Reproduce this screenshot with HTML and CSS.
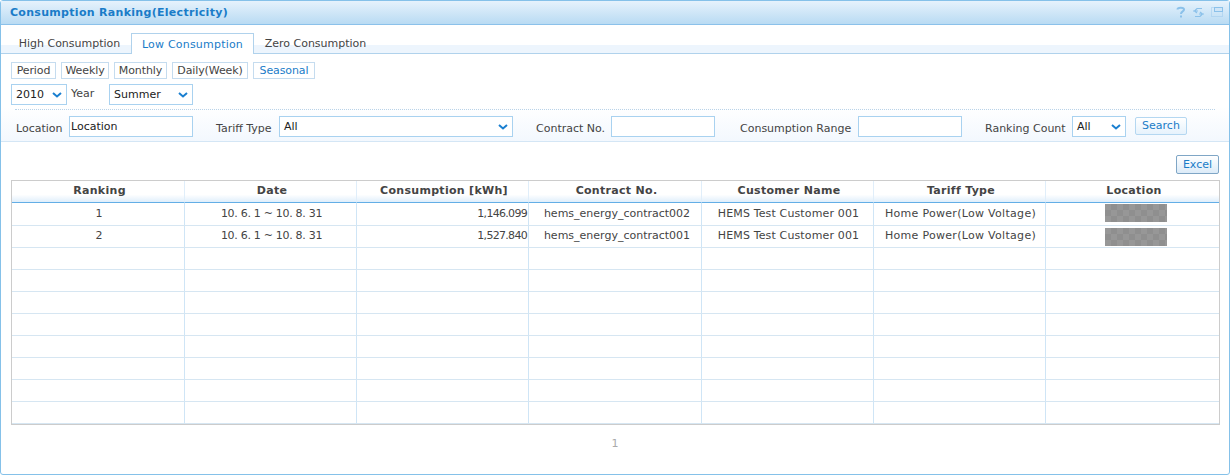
FILE: index.html
```html
<!DOCTYPE html>
<html lang="en">
<head>
    <meta charset="UTF-8">
    <title>Consumption Ranking(Electricity)</title>
    <link rel="stylesheet" href="styles.css">
</head>
<body>
<div class="panel">
    <div class="panel-head">
        <h1>Consumption Ranking(Electricity)</h1>
        <div class="head-icons">
            <svg width="10" height="12" viewBox="0 0 10 12"><path d="M1.5 3.500C1.5 1 8 1 8 3.500 8 5.500 5 5.200 5 8M5 9.500V11.500" fill="none" stroke="#8bc1ea" stroke-width="2"/></svg>
            <svg width="11" height="11" viewBox="0 0 11 11"><path d="M9 1.500H4L1.500 4 4 6M0 4H5M2 9.500H7L9.500 7 7 5M11 7H6" fill="none" stroke="#8bc1ea" stroke-width="1.200"/></svg>
            <svg width="12" height="10" viewBox="0 0 12 10"><rect x=".5" y=".5" width="11" height="9" fill="none" stroke="#9cc8ec" stroke-dasharray="1 1"/><rect x="3.500" y=".5" width="8" height="4" fill="#cfe5f7" stroke="#8bc1ea"/></svg>
        </div>
    </div>

    <div class="tabs">
        <a class="tab">High Consumption</a>
        <a class="tab active">Low Consumption</a>
        <a class="tab">Zero Consumption</a>
    </div>

    <div class="filters">
        <div class="btn-row">
            <span class="chip b1">Period</span>
            <span class="chip b2">Weekly</span>
            <span class="chip b3">Monthly</span>
            <span class="chip b4">Daily(Week)</span>
            <span class="chip b5 on">Seasonal</span>
        </div>
        <div class="period-row">
            <div class="select w-year"><span>2010</span><svg class="arrow" width="10" height="6" viewBox="0 0 10 6"><path d="M1 1L5 4.500 9 1" fill="none" stroke="#1a7fd0" stroke-width="2"/></svg></div>
            <label class="year-label">Year</label>
            <div class="select w-season"><span>Summer</span><svg class="arrow" width="10" height="6" viewBox="0 0 10 6"><path d="M1 1L5 4.500 9 1" fill="none" stroke="#1a7fd0" stroke-width="2"/></svg></div>
        </div>
        <div class="search-row">
            <label class="l-location">Location</label>
            <div class="input w-location">Location</div>
            <label class="l-tariff">Tariff Type</label>
            <div class="select w-tariff"><span>All</span><svg class="arrow" width="10" height="6" viewBox="0 0 10 6"><path d="M1 1L5 4.500 9 1" fill="none" stroke="#1a7fd0" stroke-width="2"/></svg></div>
            <label class="l-contract">Contract No.</label>
            <div class="input w-contract"></div>
            <label class="l-range">Consumption Range</label>
            <div class="input w-range"></div>
            <label class="l-count">Ranking Count</label>
            <div class="select w-count"><span>All</span><svg class="arrow" width="10" height="6" viewBox="0 0 10 6"><path d="M1 1L5 4.500 9 1" fill="none" stroke="#1a7fd0" stroke-width="2"/></svg></div>
            <span class="search-btn">Search</span>
        </div>
    </div>

    <div class="content">
        <div class="tools"><span class="excel">Excel</span></div>
        <table class="grid">
            <thead>
                <tr>
                    <th class="c1">Ranking</th>
                    <th class="c2">Date</th>
                    <th class="c3">Consumption [kWh]</th>
                    <th class="c4">Contract No.</th>
                    <th class="c5">Customer Name</th>
                    <th class="c6">Tariff Type</th>
                    <th class="c7">Location</th>
                </tr>
            </thead>
            <tbody>
                <tr class="first">
                    <td>1</td><td class="date">10. 6. 1 ~ 10. 8. 31</td><td class="num">1,146.099</td><td class="contract">hems_energy_contract002</td><td class="name">HEMS Test Customer 001</td><td class="tariff">Home Power(Low Voltage)</td><td class="pic"><div class="masked"></div></td>
                </tr>
                <tr>
                    <td>2</td><td class="date">10. 6. 1 ~ 10. 8. 31</td><td class="num">1,527.840</td><td class="contract">hems_energy_contract001</td><td class="name">HEMS Test Customer 001</td><td class="tariff">Home Power(Low Voltage)</td><td class="pic"><div class="masked"></div></td>
                </tr>
                <tr><td></td><td></td><td></td><td></td><td></td><td></td><td></td></tr>
                <tr><td></td><td></td><td></td><td></td><td></td><td></td><td></td></tr>
                <tr><td></td><td></td><td></td><td></td><td></td><td></td><td></td></tr>
                <tr><td></td><td></td><td></td><td></td><td></td><td></td><td></td></tr>
                <tr><td></td><td></td><td></td><td></td><td></td><td></td><td></td></tr>
                <tr><td></td><td></td><td></td><td></td><td></td><td></td><td></td></tr>
                <tr><td></td><td></td><td></td><td></td><td></td><td></td><td></td></tr>
                <tr><td></td><td></td><td></td><td></td><td></td><td></td><td></td></tr>
            </tbody>
        </table>
        <div class="pager">1</div>
    </div>
</div>
</body>
</html>
```

FILE: styles.css
```css
* {
    box-sizing: border-box;
}
html, body {
    margin: 0;
    padding: 0;
    background: #fff;
}
body {
    font-family: "DejaVu Sans", sans-serif;
    font-size: 11px;
    color: #444;
    width: 1230px;
    height: 475px;
    overflow: hidden;
}

.panel {
    height: 475px;
    border: 1px solid #85c1e9;
    border-radius: 3px;
}
.panel-head {
    height: 24px;
    display: flex;
    align-items: center;
    justify-content: space-between;
    padding: 0 6px 1px 9px;
    background: linear-gradient(#e6f2fc, #b9dbf3);
    border-bottom: 1px solid #8bc1ea;
}
.panel-head h1 {
    margin: 0;
    font-size: 11px;
    font-weight: bold;
    color: #1a7cc8;
    letter-spacing: 0.3px;
}
.head-icons {
    display: flex;
    align-items: center;
    gap: 7px;
}

.tabs {
    height: 29px;
    display: flex;
    padding: 8px 0 0 7px;
    background: linear-gradient(#fff 0, #fff 20px, #edf5fd 20px);
    border-bottom: 1px solid #b0d2ec;
}
.tab {
    height: 21px;
    width: 123px;
    line-height: 21px;
    text-align: center;
    color: #444;
    white-space: nowrap;
}
.tab.active {
    height: 21px;
    width: 123px;
    line-height: 22px;
    color: #1a7cc8;
    letter-spacing: 0.2px;
    background: #fff;
    border: 1px solid #b0d2ec;
    border-bottom: 0;
}

.filters {
    height: 88px;
    padding: 8px 10px 0;
    background: linear-gradient(#fff 60%, #f3f8fe);
    border-bottom: 1px solid #d4e6f5;
}
.btn-row {
    display: flex;
    gap: 5px;
}
.chip {
    height: 17px;
    line-height: 16px;
    text-align: center;
    background: #fff;
    border: 1px solid #c5dcef;
    letter-spacing: -0.1px;
    white-space: nowrap;
}
.b1 { width: 45px; }
.b2 { width: 48px; }
.b3 { width: 53px; }
.b4 { width: 76px; }
.b5 { width: 62px; }
.chip.on {
    color: #1a7cc8;
}
.period-row {
    display: flex;
    align-items: center;
    height: 21px;
    margin-top: 5px;
}
.year-label {
    width: 42px;
    padding-left: 4px;
    margin-top: -2px;
}
.select {
    position: relative;
    height: 21px;
    padding-left: 4px;
    line-height: 19px;
    color: #222;
    background: #fff;
    border: 1px solid #a9d2f0;
}
.arrow {
    position: absolute;
    right: 4px;
    top: 7px;
}
.w-year { width: 56px; }
.w-season { width: 84px; }
.w-tariff { width: 234px; }
.w-count { width: 54px; }

.search-row {
    display: flex;
    align-items: center;
    height: 27px;
    margin: 4px 4px 0;
    padding: 6px 0 0 1px;
    border-top: 1px dotted #b9d3e8;
}
.search-row label {
    white-space: nowrap;
    padding-top: 5px;
}
.input {
    height: 21px;
    padding-left: 1px;
    line-height: 20px;
    color: #222;
    background: #fff;
    border: 1px solid #a9d2f0;
}
.l-location { width: 53px; }
.w-location { width: 124px; }
.l-tariff { width: 63px; margin-left: 23px; }
.l-contract { width: 75px; margin-left: 23px; }
.w-contract { width: 104px; }
.l-range { width: 118px; margin-left: 25px; }
.w-range { width: 104px; }
.l-count { width: 87px; margin-left: 23px; }
.search-row .select {
    line-height: 20px;
}
.search-btn {
    height: 18px;
    width: 52px;
    margin-left: 9px;
    margin-top: -1px;
    line-height: 15px;
    text-align: center;
    color: #1a7cc8;
    background: linear-gradient(#fff, #e6f2fc);
    border: 1px solid #b4d7f1;
    border-radius: 2px;
}

.content {
    padding: 13px 10px 0;
}
.tools {
    display: flex;
    justify-content: flex-end;
    height: 19px;
    margin-bottom: 6px;
}
.excel {
    width: 43px;
    height: 19px;
    line-height: 18px;
    text-align: center;
    color: #1a7cc8;
    background: linear-gradient(#fff, #dcebf8);
    border: 1px solid #7fa6c6;
    border-radius: 2px;
}

.grid {
    width: 1209px;
    table-layout: fixed;
    border-collapse: separate;
    border-spacing: 0;
    border: 1px solid #ccc;
}
.grid th {
    height: 22px;
    padding: 0 0 2px 3px;
    font-size: 11px;
    font-weight: bold;
    color: #444;
    letter-spacing: 0.3px;
    background: linear-gradient(#fff 65%, #dfeefb);
    border-right: 1px solid #e0eefa;
    border-bottom: 1px solid #63aee6;
}
.grid td {
    height: 22px;
    padding: 0 0 2px 2px;
    text-align: center;
    white-space: nowrap;
    border-right: 1px solid #cfe5f6;
    border-bottom: 1px solid #d6e6f2;
}
.grid tr.first td {
    height: 23px;
}
.grid th:last-child, .grid td:last-child {
    border-right: 0;
}
.grid td.date {
    letter-spacing: -0.3px;
}
.grid td.num {
    text-align: right;
    padding-right: 1px;
    letter-spacing: -0.7px;
}
.grid td.contract {
    padding-left: 4px;
}
.grid td.name {
    letter-spacing: 0.14px;
}
.grid td.tariff {
    letter-spacing: 0.3px;
}
.grid td.pic {
    padding: 2px 0 0 0;
    vertical-align: top;
}
.grid tr.first td.pic {
    padding-top: 1px;
}
.c1 { width: 173px; }
.c2 { width: 172px; }
.c3 { width: 172px; }
.c4 { width: 173px; }
.c5 { width: 172px; }
.c6 { width: 172px; }
.c7 { width: 173px; }
.masked {
    width: 62px;
    height: 18px;
    margin: 0 0 0 59px;
    background: repeating-conic-gradient(#8f8f8f 0 25%, #979797 0 50%) 0 0 / 12px 12px;
}
.pager {
    margin-top: 12px;
    text-align: center;
    color: #aaa;
}
```
